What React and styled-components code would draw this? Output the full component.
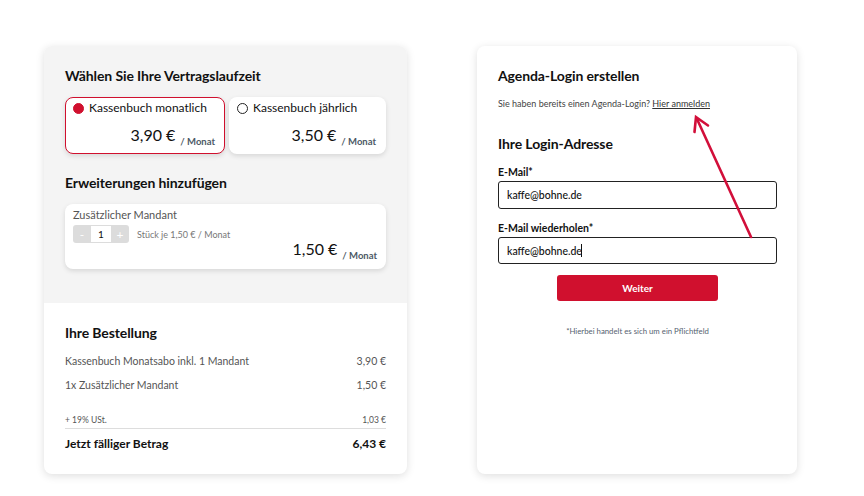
import React from 'react';
import styled, { createGlobalStyle } from 'styled-components';

const GlobalStyle = createGlobalStyle`
  html, body { margin: 0; padding: 0; background: #fff; }
  body { font-family: Lato, "Noto Sans", sans-serif; color: #111; }
  * { box-sizing: border-box; }
`;

const red = '#d0102e';

const Page = styled.div`
  position: relative;
  width: 864px;
  height: 496px;
  display: flex;
  align-items: flex-start;
  gap: 70px;
  padding: 46px 0 0 44px;
`;

const Card = styled.div`
  width: ${(p) => p.$w}px;
  height: 428px;
  background: #fff;
  border-radius: 8px;
  box-shadow: 0 2px 8px rgba(0, 0, 0, 0.13);
  overflow: hidden;
  display: flex;
  flex-direction: column;
`;

const TopSection = styled.div`
  background: #f4f4f4;
  padding: 21px 21px 34px 21px;
  height: 257px;
`;

const BottomSection = styled.div`
  padding: 21px 21px 0 21px;
  flex: 1;
`;

const Heading = styled.h2`
  margin: 0;
  font-size: 14px;
  font-weight: 700;
  line-height: 18px;
  margin-top: ${(p) => p.$mt || 0}px;
  letter-spacing: -0.1px;
`;

const OptionGrid = styled.div`
  display: grid;
  grid-template-columns: 160px 157px;
  gap: 4px;
  margin-top: 12px;
`;

const OptionCard = styled.div`
  height: 57px;
  background: #fff;
  border-radius: 8px;
  border: 1px solid ${(p) => (p.$active ? red : 'transparent')};
  box-shadow: 0 2px 5px rgba(0, 0, 0, 0.12);
  padding: 2px 9px 0 7px;
  display: flex;
  flex-direction: column;
`;

const OptionLabel = styled.div`
  display: flex;
  align-items: center;
  gap: 5px;
  font-size: 12px;
  line-height: 16px;
`;

const Radio = styled.span`
  width: 11px;
  height: 11px;
  border-radius: 50%;
  background: ${(p) => (p.$on ? red : '#fff')};
  border: 1px solid ${(p) => (p.$on ? red : '#222')};
  flex: none;
`;

const PriceRow = styled.div`
  display: flex;
  justify-content: flex-end;
  align-items: baseline;
  margin-top: ${(p) => p.$mt ?? 9}px;
`;

const Price = styled.span`
  font-size: 16px;
  line-height: 20px;
`;

const PerMonth = styled.span`
  font-size: 9.5px;
  font-weight: 700;
  color: #4c5966;
  margin-left: 5px;
  position: relative;
  top: 4px;
`;

const AddonCard = styled.div`
  margin-top: 12px;
  height: 65px;
  background: #fff;
  border-radius: 8px;
  box-shadow: 0 2px 5px rgba(0, 0, 0, 0.12);
  padding: 4px 9px 0 8px;
`;

const AddonTitle = styled.div`
  font-size: 11px;
  line-height: 14px;
  color: #555;
`;

const StepRow = styled.div`
  display: flex;
  align-items: center;
  gap: 8px;
  margin-top: 3px;
`;

const Stepper = styled.div`
  display: flex;
  height: 18px;
  border-radius: 3px;
  background: #dcdcdc;
  overflow: hidden;
`;

const StepBtn = styled.span`
  width: 18px;
  display: flex;
  align-items: center;
  justify-content: center;
  color: #fff;
  font-size: 12px;
`;

const StepValue = styled.span`
  width: 20px;
  background: #fff;
  margin: 1px 0;
  display: flex;
  align-items: center;
  justify-content: center;
  font-size: 10px;
`;

const StepNote = styled.span`
  font-size: 9px;
  color: #777;
`;

const OrderRow = styled.div`
  display: flex;
  justify-content: space-between;
  font-size: ${(p) => p.$size || 10.5}px;
  color: ${(p) => (p.$bold ? '#111' : '#555')};
  font-weight: ${(p) => (p.$bold ? 700 : 400)};
  margin-top: ${(p) => p.$mt}px;
  line-height: 14px;
  padding-bottom: ${(p) => p.$pb || 0}px;
  border-bottom: ${(p) => (p.$line ? '1px solid #ddd' : 'none')};
`;

const RightBody = styled.div`
  padding: 21px 20px 0 21px;
`;

const Info = styled.p`
  margin: 13px 0 0 0;
  font-size: 9px;
  color: #444;
  line-height: 12px;
`;

const Link = styled.a`
  color: #333;
  text-decoration: underline;
`;

const FieldLabel = styled.label`
  display: block;
  font-size: 10.5px;
  font-weight: 700;
  line-height: 12px;
  margin-top: ${(p) => p.$mt}px;
`;

const InputWrap = styled.div`
  position: relative;
  margin-top: 3px;
`;

const Input = styled.input`
  display: block;
  width: 100%;
  height: ${(p) => p.$h || 28}px;
  border: 1px solid #222;
  border-radius: 3px;
  padding: 0 8px;
  font-family: Lato, "Noto Sans", sans-serif;
  font-size: 10.5px;
  font-weight: 500;
  color: #111;
  outline: none;
`;

const Caret = styled.span`
  position: absolute;
  left: 83px;
  top: 7px;
  width: 1px;
  height: 13px;
  background: #111;
`;

const Button = styled.button`
  display: block;
  width: 161px;
  height: 26px;
  margin: 11px auto 0 auto;
  border: none;
  border-radius: 3px;
  background: ${red};
  color: #fff;
  font-family: Lato, "Noto Sans", sans-serif;
  font-size: 10px;
  font-weight: 700;
`;

const Footnote = styled.p`
  margin: 25px 0 0 0;
  text-align: center;
  font-size: 7.8px;
  color: #556270;
`;

const Arrow = styled.svg`
  position: absolute;
  left: 0;
  top: 0;
  pointer-events: none;
`;

export default function App() {
  return (
    <>
      <GlobalStyle />
      <Page>
        <Card $w={363}>
          <TopSection>
            <Heading>Wählen Sie Ihre Vertragslaufzeit</Heading>
            <OptionGrid>
              <OptionCard $active>
                <OptionLabel>
                  <Radio $on />
                  Kassenbuch monatlich
                </OptionLabel>
                <PriceRow>
                  <Price>3,90 €</Price>
                  <PerMonth>/ Monat</PerMonth>
                </PriceRow>
              </OptionCard>
              <OptionCard>
                <OptionLabel>
                  <Radio />
                  Kassenbuch jährlich
                </OptionLabel>
                <PriceRow>
                  <Price>3,50 €</Price>
                  <PerMonth>/ Monat</PerMonth>
                </PriceRow>
              </OptionCard>
            </OptionGrid>
            <Heading $mt={20}>Erweiterungen hinzufügen</Heading>
            <AddonCard>
              <AddonTitle>Zusätzlicher Mandant</AddonTitle>
              <StepRow>
                <Stepper>
                  <StepBtn>-</StepBtn>
                  <StepValue>1</StepValue>
                  <StepBtn>+</StepBtn>
                </Stepper>
                <StepNote>Stück je 1,50 € / Monat</StepNote>
              </StepRow>
              <PriceRow $mt={-4}>
                <Price>1,50 €</Price>
                <PerMonth>/ Monat</PerMonth>
              </PriceRow>
            </AddonCard>
          </TopSection>
          <BottomSection>
            <Heading>Ihre Bestellung</Heading>
            <OrderRow $mt={12}>
              <span>Kassenbuch Monatsabo inkl. 1 Mandant</span>
              <span>3,90 €</span>
            </OrderRow>
            <OrderRow $mt={10}>
              <span>1x Zusätzlicher Mandant</span>
              <span>1,50 €</span>
            </OrderRow>
            <OrderRow $mt={21} $size={8.5} $line $pb={1}>
              <span>+ 19% USt.</span>
              <span>1,03 €</span>
            </OrderRow>
            <OrderRow $mt={8} $size={12} $bold>
              <span>Jetzt fälliger Betrag</span>
              <span>6,43 €</span>
            </OrderRow>
          </BottomSection>
        </Card>
        <Card $w={320}>
          <RightBody>
            <Heading>Agenda-Login erstellen</Heading>
            <Info>
              Sie haben bereits einen Agenda-Login? <Link href="#">Hier anmelden</Link>
            </Info>
            <Heading $mt={25}>Ihre Login-Adresse</Heading>
            <FieldLabel $mt={13}>E-Mail*</FieldLabel>
            <InputWrap>
              <Input defaultValue="kaffe@bohne.de" />
            </InputWrap>
            <FieldLabel $mt={13}>E-Mail wiederholen*</FieldLabel>
            <InputWrap>
              <Input $h={27} defaultValue="kaffe@bohne.de" />
              <Caret />
            </InputWrap>
            <Button>Weiter</Button>
            <Footnote>*Hierbei handelt es sich um ein Pflichtfeld</Footnote>
          </RightBody>
        </Card>
        <Arrow width="864" height="496" viewBox="0 0 864 496">
          <g stroke="#d20f3a" strokeWidth="2.6" strokeLinecap="round" fill="none">
            <line x1="751" y1="237" x2="697" y2="119" />
            <polyline points="694.5,132 696,117 708,125.5" strokeLinejoin="miter" />
          </g>
        </Arrow>
      </Page>
    </>
  );
}
